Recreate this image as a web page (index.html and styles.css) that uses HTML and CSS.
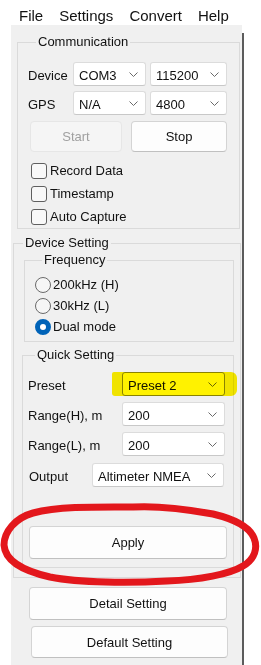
FILE: index.html
```html
<!DOCTYPE html>
<html lang="en">
<head>
  <meta charset="UTF-8" />
  <title>Sonar Control</title>
  <link rel="stylesheet" href="styles.css">
</head>
<body>
  <div class="menubar">
    <span>File</span>
    <span>Settings</span>
    <span>Convert</span>
    <span>Help</span>
  </div>

  <div class="window">
    <div class="panel">
      <fieldset class="group comm">
        <legend>Communication</legend>
        <div class="port-grid">
          <span class="lbl">Device</span>
          <div class="combo"><span>COM3</span><svg class="chev" viewBox="0 0 9 5"><path d="M0.5 0.5 L4.5 4.5 L8.5 0.5"/></svg></div>
          <div class="combo"><span>115200</span><svg class="chev" viewBox="0 0 9 5"><path d="M0.5 0.5 L4.5 4.5 L8.5 0.5"/></svg></div>
          <span class="lbl">GPS</span>
          <div class="combo"><span>N/A</span><svg class="chev" viewBox="0 0 9 5"><path d="M0.5 0.5 L4.5 4.5 L8.5 0.5"/></svg></div>
          <div class="combo"><span>4800</span><svg class="chev" viewBox="0 0 9 5"><path d="M0.5 0.5 L4.5 4.5 L8.5 0.5"/></svg></div>
        </div>
        <div class="btn-row">
          <button class="btn start" disabled>Start</button>
          <button class="btn stop">Stop</button>
        </div>
        <div class="checks">
          <label class="check"><span class="box"></span>Record Data</label>
          <label class="check"><span class="box"></span>Timestamp</label>
          <label class="check"><span class="box"></span>Auto Capture</label>
        </div>
      </fieldset>

      <fieldset class="group device">
        <legend>Device Setting</legend>

        <fieldset class="group freq">
          <legend>Frequency</legend>
          <label class="radio"><span class="dot"></span>200kHz (H)</label>
          <label class="radio"><span class="dot"></span>30kHz (L)</label>
          <label class="radio"><span class="dot on"></span>Dual mode</label>
        </fieldset>

        <fieldset class="group quick">
          <legend>Quick Setting</legend>
          <div class="qrow">
            <span class="lbl wide-lbl">Preset</span>
            <div class="combo focus"><span>Preset 2</span><svg class="chev" viewBox="0 0 9 5"><path d="M0.5 0.5 L4.5 4.5 L8.5 0.5"/></svg></div>
          </div>
          <div class="qrow">
            <span class="lbl wide-lbl">Range(H), m</span>
            <div class="combo"><span>200</span><svg class="chev" viewBox="0 0 9 5"><path d="M0.5 0.5 L4.5 4.5 L8.5 0.5"/></svg></div>
          </div>
          <div class="qrow">
            <span class="lbl wide-lbl">Range(L), m</span>
            <div class="combo"><span>200</span><svg class="chev" viewBox="0 0 9 5"><path d="M0.5 0.5 L4.5 4.5 L8.5 0.5"/></svg></div>
          </div>
          <div class="qrow output">
            <span class="lbl">Output</span>
            <div class="combo long"><span>Altimeter NMEA</span><svg class="chev" viewBox="0 0 9 5"><path d="M0.5 0.5 L4.5 4.5 L8.5 0.5"/></svg></div>
          </div>
          <button class="btn apply">Apply</button>
        </fieldset>
      </fieldset>

      <button class="btn wide detail">Detail Setting</button>
      <button class="btn wide default">Default Setting</button>
    </div>
    <div class="edge"></div>
  </div>

  <!-- annotations drawn over the screenshot -->
  <div class="highlight"></div>
  <svg class="mark" viewBox="0 498 261 96">
    <path d="M213 514 C180 508 150 506 133 507 C100 507 60 506 33 513 C15 518 4 532 4 545 C5 560 20 570 50 577 C80 583 130 583 167 581 C200 580 230 574 243 566 C255 559 258 548 254 538 C250 528 238 520 213 514 Z"/>
  </svg>
</body>
</html>
```

FILE: styles.css
```css
body {
  margin: 0;
  width: 261px;
  height: 665px;
  overflow: hidden;
  position: relative;
  background: #fff;
  font-family: "Liberation Sans", Arial, sans-serif;
  font-size: 13px;
  color: #111;
}

.menubar {
  height: 25px;
  box-sizing: border-box;
  padding: 7px 0 0 19px;
  display: flex;
  gap: 16px;
  font-size: 15px;
  line-height: 17px;
}

.window {
  display: flex;
  margin-left: 11px;
  width: 233px;
  height: 640px;
}

.panel {
  width: 231px;
  background: #f0f0f0;
}

.edge {
  width: 2px;
  margin-top: 8px;
  background: #5c5c5c;
}

/* group boxes */
.group {
  box-sizing: border-box;
  min-width: 0;
  margin: 0;
  padding: 0;
  border: 1px solid #dadada;
}

.group legend {
  padding: 0 2px;
  line-height: 16px;
}

.comm {
  width: 223px;
  margin: 9px 0 0 6px;
  padding: 12px 0 0 10px;
}

.comm legend {
  margin-left: 8px;
}

.device {
  width: 228px;
  margin: 6px 0 0 2px;
  padding: 0 0 9px 0;
}

.device > legend {
  margin-left: 9px;
}

.freq {
  width: 210px;
  margin: 1px 0 0 10px;
  padding: 6px 0 4px 10px;
}

.quick {
  width: 212px;
  margin: 5px 0 0 8px;
  padding: 9px 0 8px 5px;
}

.freq legend,
.quick legend {
  margin-left: 7px;
}

/* combos */
.port-grid {
  display: grid;
  grid-template-columns: 41px 73px 77px;
  grid-auto-rows: 24px;
  column-gap: 4px;
  row-gap: 5px;
  align-items: center;
}

.lbl {
  padding-top: 2px;
}

.combo {
  box-sizing: border-box;
  height: 24px;
  display: flex;
  align-items: center;
  justify-content: space-between;
  padding: 2px 7px 0 5px;
  background: #fff;
  border: 1px solid #dcdcdc;
  border-bottom-color: #c8c8c8;
  border-radius: 3px;
}

.combo.focus {
  border-color: #8a8a8a;
}

.chev {
  width: 9px;
  height: 5px;
  margin-top: -2px;
  fill: none;
  stroke: #6a6a6a;
  stroke-width: 1;
}

.qrow {
  display: flex;
  align-items: center;
  height: 24px;
  margin-bottom: 6px;
}

.qrow .wide-lbl {
  width: 94px;
}

.qrow .combo {
  width: 103px;
}

.qrow.output {
  margin-top: 7px;
}

.qrow.output .lbl {
  width: 64px;
  padding-left: 1px;
  box-sizing: border-box;
}

.qrow .combo.long {
  width: 132px;
}

/* buttons */
.btn {
  box-sizing: border-box;
  height: 31px;
  padding: 0;
  font: inherit;
  color: #111;
  background: #fdfdfd;
  border: 1px solid #d4d4d4;
  border-bottom-color: #c0c0c0;
  border-radius: 4px;
}

.btn:disabled {
  background: #f5f5f5;
  border-color: #e6e6e6;
  color: #a0a0a0;
}

.btn-row {
  display: flex;
  gap: 9px;
  margin-top: 6px;
  padding-left: 2px;
}

.start {
  width: 92px;
}

.stop {
  width: 96px;
}

.apply {
  display: block;
  width: 198px;
  height: 33px;
  margin: 39px 0 0 1px;
}

.wide {
  display: block;
  width: 198px;
  height: 33px;
}

.detail {
  margin: 9px 0 0 18px;
}

.default {
  width: 197px;
  height: 32px;
  margin: 6px 0 0 20px;
}

/* checkboxes and radios */
.checks {
  margin-top: 7px;
  padding-left: 3px;
}

.check,
.radio {
  display: flex;
  align-items: center;
  gap: 3px;
}

.check {
  height: 23px;
}

.radio {
  height: 21px;
  gap: 2px;
}

.box {
  box-sizing: border-box;
  width: 16px;
  height: 16px;
  border: 1px solid #5f5f5f;
  border-radius: 3px;
  background: #f8f8f8;
}

.dot {
  box-sizing: border-box;
  width: 16px;
  height: 16px;
  border: 1px solid #6a6a6a;
  border-radius: 50%;
  background: #f6f6f6;
}

.dot.on {
  border: 5px solid #0063b8;
  background: #fff;
}

/* annotations */
.highlight {
  position: absolute;
  left: 112px;
  top: 372px;
  width: 125px;
  height: 24px;
  background: #fff200;
  mix-blend-mode: multiply;
  border-radius: 2px 6px 6px 3px;
}

.mark {
  position: absolute;
  left: 0;
  top: 498px;
  width: 261px;
  height: 96px;
  fill: none;
  stroke: #e3171c;
  stroke-width: 7;
  stroke-linecap: round;
}
```
